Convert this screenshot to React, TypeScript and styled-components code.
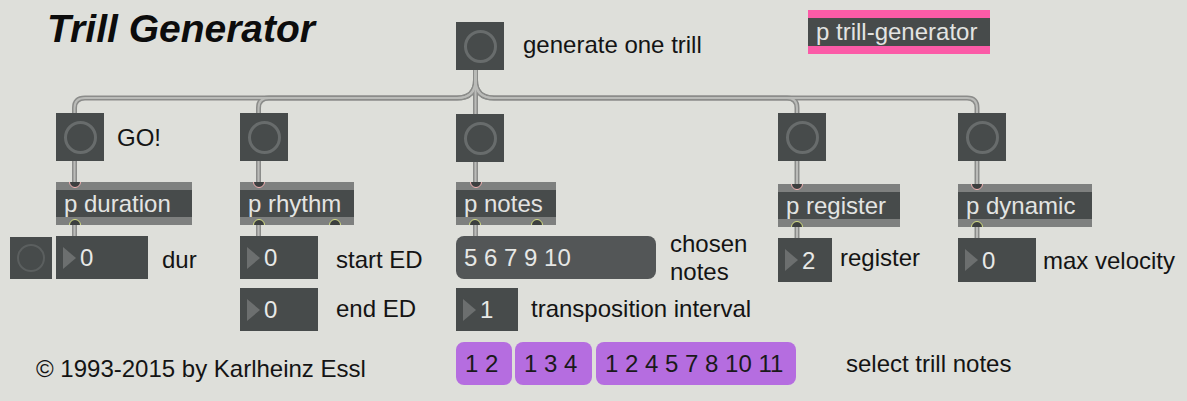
import React from "react";
import styled, { createGlobalStyle } from "styled-components";

const Global = createGlobalStyle`
  html, body { margin: 0; padding: 0; background: #dedfda; }
  #root { width: 1187px; height: 401px; }
`;

const Patcher = styled.div`
  position: relative;
  width: 1187px;
  height: 401px;
  background: #dedfda;
  overflow: hidden;
  font-family: "Liberation Sans", Arial, sans-serif;
  font-size: 24px;
  color: #141414;
`;

type Pos = { $x: number; $y: number };
type Mt = { $mt?: number };

const CordLayer = styled.svg`
  position: absolute;
  left: 0;
  top: 0;
`;

/* a node group placed on the free patcher canvas */
const Strand = styled.div<Pos>`
  position: absolute;
  left: ${(p) => p.$x}px;
  top: ${(p) => p.$y}px;
  display: flex;
  flex-direction: column;
  align-items: flex-start;
`;

const Row = styled.div<Mt & { $gap?: number; $ml?: number; $align?: string }>`
  display: flex;
  align-items: ${(p) => p.$align ?? "center"};
  gap: ${(p) => p.$gap ?? 14}px;
  margin-top: ${(p) => p.$mt ?? 0}px;
  margin-left: ${(p) => p.$ml ?? 0}px;
`;

const Title = styled.div<Pos>`
  position: absolute;
  left: ${(p) => p.$x}px;
  top: ${(p) => p.$y}px;
  font-weight: bold;
  font-style: italic;
  font-size: 39px;
  line-height: 45px;
  white-space: nowrap;
  color: #0c0c0c;
`;

const Comment = styled.div<Pos>`
  position: absolute;
  left: ${(p) => p.$x}px;
  top: ${(p) => p.$y}px;
  line-height: 27px;
  white-space: nowrap;
`;

const Label = styled.div<{ $dy?: number }>`
  line-height: 27px;
  white-space: nowrap;
  ${(p) =>
    p.$dy
      ? p.$dy > 0
        ? `padding-top: ${p.$dy * 2}px;`
        : `padding-bottom: ${-p.$dy * 2}px;`
      : ""}
`;

/* two-line comment that may overhang its row */
const TwoLineLabel = styled.div`
  line-height: 28px;
  white-space: pre;
  margin: -7px 0;
`;

const BangBox = styled.div<Mt & { $s: number }>`
  flex: none;
  width: ${(p) => p.$s}px;
  height: ${(p) => p.$s}px;
  margin-top: ${(p) => p.$mt ?? 0}px;
  background: #474b4b;
  display: flex;
  align-items: center;
  justify-content: center;
`;

const Ring = styled.div<{ $dim?: boolean }>`
  box-sizing: border-box;
  width: ${(p) => (p.$dim ? 28 : 33)}px;
  height: ${(p) => (p.$dim ? 28 : 33)}px;
  border-radius: 50%;
  border: ${(p) => (p.$dim ? "2.5px solid #5b5f5f" : "3px solid #686c6c")};
`;

const PBox = styled.div<Mt & { $w: number; $h: number }>`
  position: relative;
  flex: none;
  width: ${(p) => p.$w}px;
  height: ${(p) => p.$h}px;
  margin-top: ${(p) => p.$mt ?? 0}px;
  display: flex;
  flex-direction: column;
  overflow: hidden;
`;

const Band = styled.div<{ $c: string }>`
  flex: none;
  height: 8px;
  background: ${(p) => p.$c};
`;

const PBody = styled.div`
  flex: 1;
  background: #474b4b;
  color: #e3e4e2;
  padding-left: 8px;
  line-height: 27px;
  white-space: nowrap;
`;

const Port = styled.span<{ $at: number; $out?: boolean }>`
  position: absolute;
  box-sizing: border-box;
  left: ${(p) => p.$at - 6}px;
  ${(p) => (p.$out ? "bottom: -6px;" : "top: -6px;")}
  width: 12px;
  height: 12px;
  border-radius: 50%;
  background: #3c3f3f;
  border: 1.5px solid ${(p) => (p.$out ? "#d6df84" : "#f3b3b3")};
`;

const NumBox = styled.div<{ $w: number; $h: number }>`
  flex: none;
  width: ${(p) => p.$w}px;
  height: ${(p) => p.$h}px;
  background: #474b4b;
  color: #e8e9e7;
  display: flex;
  align-items: center;
`;

const Arrow = styled.span`
  flex: none;
  width: 0;
  height: 0;
  margin-left: 7px;
  border-top: 11.5px solid transparent;
  border-bottom: 11.5px solid transparent;
  border-left: 13px solid #6c6f6f;
`;

const NumValue = styled.span`
  margin-left: 4px;
  line-height: 27px;
`;

const MsgBox = styled.div<{ $w: number; $purple?: boolean }>`
  flex: none;
  width: ${(p) => p.$w}px;
  height: 43px;
  box-sizing: border-box;
  padding-left: ${(p) => (p.$purple ? 9 : 8)}px;
  border-radius: 8px;
  background: ${(p) => (p.$purple ? "#b56de0" : "#535657")};
  color: ${(p) => (p.$purple ? "#1a1a1a" : "#e6e7e5")};
  line-height: 43px;
  white-space: nowrap;
`;

const Presets = styled.div`
  display: flex;
  gap: 3px;
  & > :last-child {
    margin-left: 1px;
  }
`;

function Bang({ size = 48, mt, dim }: { size?: number; mt?: number; dim?: boolean }) {
  return (
    <BangBox $s={size} $mt={mt}>
      <Ring $dim={dim} />
    </BangBox>
  );
}

function PObj({
  w, h = 43, mt, text, ins = [], outs = [], band = "#7e807f",
}: {
  w: number; h?: number; mt?: number; text: string;
  ins?: number[]; outs?: number[]; band?: string;
}) {
  return (
    <PBox $w={w} $h={h} $mt={mt}>
      <Band $c={band} />
      <PBody>{text}</PBody>
      <Band $c={band} />
      {ins.map((a) => <Port key={"i" + a} $at={a} />)}
      {outs.map((a) => <Port key={"o" + a} $at={a} $out />)}
    </PBox>
  );
}

function Num({ w, h = 43, v }: { w: number; h?: number; v: string }) {
  return (
    <NumBox $w={w} $h={h}>
      <Arrow />
      <NumValue>{v}</NumValue>
    </NumBox>
  );
}

const cords = [
  "M475.5,70 V114",
  "M475.5,70 V80 Q475.5,98 457,98 H85 Q74.5,98 74.5,108 V113",
  "M475.5,70 V80 Q475.5,98 457,98 H269 Q258.5,98 258.5,108 V113",
  "M475.5,70 V80 Q475.5,98 494,98 H787 Q797,98 797,108 V113",
  "M475.5,70 V80 Q475.5,98 494,98 H967 Q977,98 977,108 V113",
  "M74.5,161 V182", "M74.5,225 V236",
  "M258.5,161 V182", "M258.5,225 V236",
  "M475.5,162 V182", "M475.5,225 V236",
  "M797,161 V184", "M797,227 V238",
  "M977,161 V184", "M977,227 V238",
];

export default function App() {
  return (
    <>
      <Global />
      <Patcher>
        <CordLayer width={1187} height={401} viewBox="0 0 1187 401">
          {cords.map((d, i) => (
            <path key={"a" + i} d={d} fill="none" stroke="#8b8c8a" strokeWidth={5} />
          ))}
          {cords.map((d, i) => (
            <path key={"b" + i} d={d} fill="none" stroke="#babbb8" strokeWidth={2} />
          ))}
        </CordLayer>

        <Title $x={47} $y={6}>Trill Generator</Title>

        <Strand $x={808} $y={10}>
          <PObj w={182} h={44} text="p trill-generator" band="#fb5ba7" />
        </Strand>

        {/* duration strand */}
        <Strand $x={10} $y={113}>
          <Row $ml={46} $gap={13}>
            <Bang />
            <Label>GO!</Label>
          </Row>
          <Row $ml={46} $mt={21}>
            <PObj w={136} text="p duration" ins={[19]} outs={[19]} />
          </Row>
          <Row $mt={11} $gap={4} $align="flex-end">
            <Bang size={42} dim />
            <Row $gap={14}>
              <Num w={92} v="0" />
              <Label $dy={2}>dur</Label>
            </Row>
          </Row>
        </Strand>

        {/* rhythm strand */}
        <Strand $x={240} $y={113}>
          <Bang />
          <PObj mt={21} w={114} text="p rhythm" ins={[19]} outs={[19, 95]} />
          <Row $mt={11} $gap={18}>
            <Num w={78} v="0" />
            <Label $dy={2}>start ED</Label>
          </Row>
          <Row $mt={9} $gap={18}>
            <Num w={78} v="0" />
            <Label $dy={-1}>end ED</Label>
          </Row>
        </Strand>

        {/* notes strand */}
        <Strand $x={456} $y={22}>
          <Row $gap={19}>
            <Bang />
            <Label $dy={-1.5}>generate one trill</Label>
          </Row>
          <Bang mt={44} />
          <PObj mt={20} w={100} text="p notes" ins={[20]} outs={[19, 81]} />
          <Row $mt={11} $gap={14}>
            <MsgBox $w={200}>5 6 7 9 10</MsgBox>
            <TwoLineLabel>{"chosen\nnotes"}</TwoLineLabel>
          </Row>
          <Row $mt={9} $gap={13}>
            <Num w={62} v="1" />
            <Label $dy={-1}>transposition interval</Label>
          </Row>
          <Row $mt={11} $gap={50}>
            <Presets>
              <MsgBox $w={56} $purple>1 2</MsgBox>
              <MsgBox $w={77} $purple>1 3 4</MsgBox>
              <MsgBox $w={200} $purple>1 2 4 5 7 8 10 11</MsgBox>
            </Presets>
            <Label>select trill notes</Label>
          </Row>
        </Strand>

        {/* register strand */}
        <Strand $x={778} $y={113}>
          <Bang />
          <PObj mt={23} w={122} text="p register" ins={[19]} outs={[19]} />
          <Row $mt={11} $gap={8}>
            <Num w={54} h={44} v="2" />
            <Label $dy={-2.5}>register</Label>
          </Row>
        </Strand>

        {/* dynamic strand */}
        <Strand $x={958} $y={113}>
          <Bang />
          <PObj mt={23} w={134} text="p dynamic" ins={[19]} outs={[19]} />
          <Row $mt={11} $gap={7}>
            <Num w={78} h={44} v="0" />
            <Label>max velocity</Label>
          </Row>
        </Strand>

        <Comment $x={36} $y={355}>© 1993-2015 by Karlheinz Essl</Comment>
      </Patcher>
    </>
  );
}
